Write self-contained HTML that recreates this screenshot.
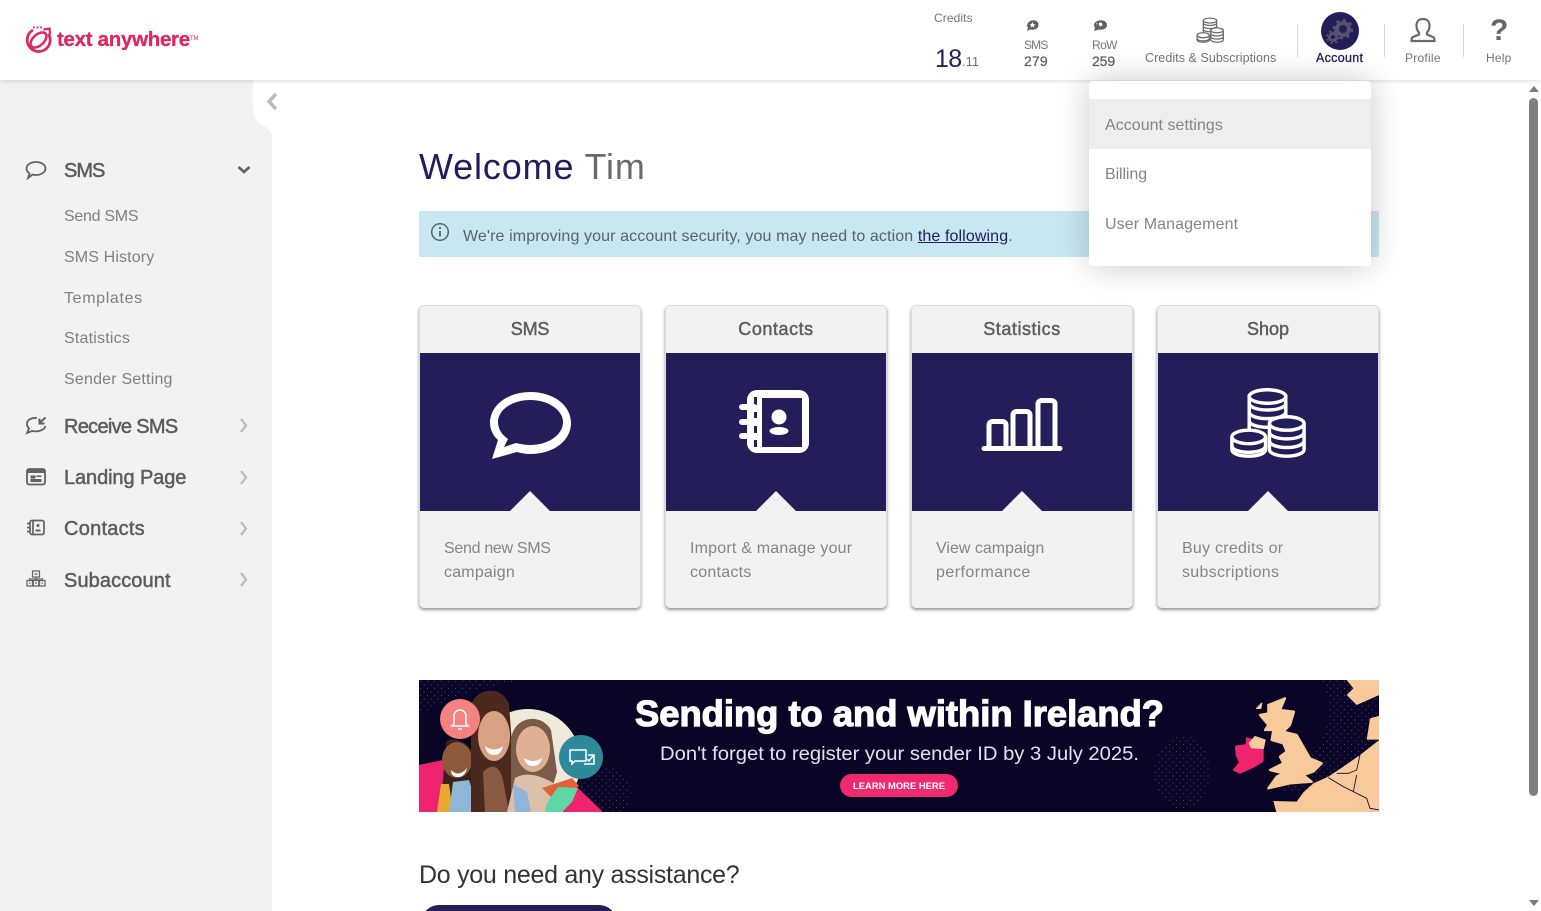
<!DOCTYPE html>
<html lang="en"><head><meta charset="utf-8"><title>Text Anywhere</title>
<style>
html,body{margin:0;padding:0;width:1541px;height:911px;overflow:hidden;background:#fff;font-family:"Liberation Sans",Arial,sans-serif;}
#p{position:relative;width:1541px;height:911px;overflow:hidden;background:#fff}
.a{position:absolute}
.t{position:absolute;white-space:nowrap;line-height:20px;height:20px}
.side{position:absolute;left:0;top:80px;width:272px;height:831px;background:#f2f2f2}
.top{position:absolute;left:0;top:0;width:1541px;height:80px;background:#fff;box-shadow:0 1px 5px rgba(0,0,0,.14)}
.sub{font-size:16px;color:#808080}
.nav{font-size:20px;color:#5d5d5d;-webkit-text-stroke:.5px #5d5d5d}
.lab{font-size:12px;color:#757575}
.card{position:absolute;top:305px;width:220px;height:302px;background:#f2f2f2;border:1px solid #dcdcdc;border-bottom:none;border-radius:5px;box-shadow:0 2px 3px rgba(0,0,0,.42)}
.card h3{position:absolute;left:0;top:12px;width:220px;margin:0;text-align:center;font-size:18px;line-height:22px;color:#5f5f5f;font-weight:normal;-webkit-text-stroke:.5px #5f5f5f}
.card .n{position:absolute;left:0;top:47px;width:220px;height:158px;background:#231d5a}
.card .n svg{position:absolute;left:0;top:0}
.card p{position:absolute;left:24px;top:231px;margin:0;font-size:16px;line-height:24px;color:#858585;white-space:nowrap}
</style></head><body><div id="p">

<svg width="0" height="0" style="position:absolute"><defs>
<symbol id="coins" viewBox="0 0 80 72">
<g fill="none" stroke="currentColor" stroke-width="3.6">
<path d="M21 7v40M59 7v32"/><path d="M21 16c0 4 8 7 19 7s19-3 19-7M21 25c0 4 8 7 19 7s19-3 19-7M21 34c0 4 8 7 19 7s19-3 19-7"/>
<ellipse cx="40" cy="9" rx="19" ry="7"/>
</g>
<g fill="#fff0" stroke="currentColor" stroke-width="3.6">
<path class="bg" d="M42 37v27c0 4 8 7 18 7s18-3 18-7V37z" fill="var(--bg)" stroke="none"/>
<path d="M42 37v27c0 4 8 7 18 7s18-3 18-7V37"/><path d="M42 46c0 4 8 7 18 7s18-3 18-7M42 55c0 4 8 7 18 7s18-3 18-7"/>
<ellipse cx="60" cy="37" rx="18" ry="7" fill="var(--bg)"/>
<path d="M3 51v13c0 4 7 7 17.500 7s17.500-3 17.500-7V51z" fill="var(--bg)" stroke="none"/>
<path d="M3 51v13c0 4 7 7 17.500 7s17.500-3 17.500-7V51"/><path d="M3 60c0 4 7 7 17.500 7s17.500-3 17.500-7"/>
<ellipse cx="20.500" cy="51" rx="17.500" ry="7" fill="var(--bg)"/>
</g></symbol>
</defs></svg>

<!-- sidebar -->
<div class="side"></div>
<svg class="a" style="left:250px;top:78px" width="30" height="60"><path d="M3 2H22V57C18 48 12 47 8 44 4 40 3 34 3 27Z" fill="#fff"/><path d="M26 16l-7 7.500 7 7.500" fill="none" stroke="#bdbdbd" stroke-width="3.600"/></svg>

<svg class="a" style="left:24px;top:160px" width="24" height="20" fill="none" stroke="#626262" stroke-width="1.800"><path d="M4 18l1.500-4.500C3.500 12 2.500 10 2.500 8.500 2.500 5 6.500 2 12 2s9.500 3 9.500 6.500S17.500 15 12 15c-1.500 0-2.500-.2-3.500-.4z"/></svg>
<div class="t nav" style="left:64px;top:161px;letter-spacing:-1px">SMS</div>
<svg class="a" style="left:236px;top:165px" width="16" height="10" fill="none" stroke="#626262" stroke-width="2.600"><path d="M2.500 2l5.500 5 5.500-5"/></svg>
<div class="t sub" style="left:64px;top:207px;letter-spacing:-.28px">Send SMS</div>
<div class="t sub" style="left:64px;top:248px;letter-spacing:.13px">SMS History</div>
<div class="t sub" style="left:64px;top:289px;letter-spacing:.65px">Templates</div>
<div class="t sub" style="left:64px;top:329px;letter-spacing:.2px">Statistics</div>
<div class="t sub" style="left:64px;top:370px;letter-spacing:.2px">Sender Setting</div>

<svg class="a" style="left:24px;top:415px" width="24" height="20" fill="none" stroke="#626262" stroke-width="1.800"><path d="M13 3C7 2.500 3 5 3 9c0 2 1 3.500 2 4.500L3 18l5-2c5 1 12 0 13.500-5"/><path d="M21.500 2.500L15.500 8M15.500 3.500V8.500H20.500" stroke-width="2"/></svg>
<div class="t nav" style="left:64px;top:417px;letter-spacing:-.7px">Receive SMS</div>
<svg class="a" style="left:26px;top:468px" width="20" height="18"><rect x="1" y="1" width="18" height="15.500" rx="2" fill="none" stroke="#626262" stroke-width="1.800"/><rect x="1" y="1" width="18" height="4" fill="#626262"/><rect x="4.500" y="7.500" width="5" height="3" fill="#626262"/><rect x="4.500" y="11" width="11" height="3" fill="#626262"/><rect x="10.500" y="7.500" width="5" height="1.500" fill="#626262"/></svg>
<div class="t nav" style="left:64px;top:468px;letter-spacing:-.1px">Landing Page</div>
<svg class="a" style="left:26px;top:519px" width="20" height="18" fill="none" stroke="#626262" stroke-width="1.700"><rect x="4" y="1.500" width="14" height="14" rx="2"/><path d="M1 4.500h3M1 8.500h3M1 12.500h3M7 2v13"/><circle cx="12" cy="6.500" r="1.500" fill="#626262" stroke="none"/><path d="M9.500 11.500h5" stroke-width="2"/></svg>
<div class="t nav" style="left:64px;top:519px;letter-spacing:.25px">Contacts</div>
<svg class="a" style="left:26px;top:570px" width="20" height="18" fill="none" stroke="#626262" stroke-width="1.200"><rect x="6.500" y="1" width="7" height="6"/><rect x="1" y="10.500" width="5.500" height="5.500"/><rect x="7.300" y="10.500" width="5.500" height="5.500"/><rect x="13.500" y="10.500" width="5.500" height="5.500"/><path d="M10 7v3.500M3.500 10.500V9h13v1.500M3 13h1.500M9 13h2M15.500 13h1.500M8.500 4h3"/></svg>
<div class="t nav" style="left:64px;top:571px;letter-spacing:.1px">Subaccount</div>
<svg class="a" style="left:238px;top:417px" width="12" height="175" fill="none" stroke="#bdbdbd" stroke-width="2.400"><path d="M3 2l5 6.500-5 6.500M3 54l5 6.500-5 6.500M3 105l5 6.500-5 6.500M3 156l5 6.500-5 6.500"/></svg>

<!-- top bar -->
<div class="top"></div>
<svg class="a" style="left:24px;top:24px" width="29" height="30" fill="none" stroke="#e0265f"><path d="M9 6A11.500 11.500 0 1 0 24.500 10" stroke-width="2.700"/><ellipse cx="14.500" cy="16" rx="9.500" ry="5.500" transform="rotate(-42 14.500 16)" stroke-width="2.500"/><path d="M19.500 5.500l6-1 .5 6" stroke-width="2.200"/><path d="M9 3.500h9" stroke-width="1.800" stroke-dasharray="1.800 1.800"/></svg>
<div class="t" style="left:57px;top:30px;font-size:20.500px;font-weight:bold;color:#e0265f;letter-spacing:-.3px;-webkit-text-stroke:.3px #e0265f">text anywhere</div>
<div class="t" style="left:190px;top:31px;font-size:6px;color:#e0265f;height:16px;line-height:16px;letter-spacing:-.2px">TM</div>

<div class="t lab" style="left:934px;top:8px;letter-spacing:.1px">Credits</div>
<div class="t" style="left:935px;top:49px;font-size:25px;color:#231d5a;letter-spacing:-.7px">18</div>
<div class="t" style="left:962px;top:52px;font-size:13px;color:#6f6f6f">.11</div>

<svg class="a" style="left:1025px;top:19px" width="15" height="13"><path d="M2 12l1-3C1.500 7.500 1.500 3 6.500 1.500c4-1 7 1 7 4.500 0 3.500-4 5.500-8 4.500z" fill="#626262"/><path d="M7.500 3l.9 2 2 .2-1.500 1.300.5 2-1.900-1-1.900 1 .5-2-1.500-1.300 2-.2z" fill="#fff"/></svg>
<div class="t lab" style="left:1024px;top:35px;letter-spacing:-.9px">SMS</div>
<div class="t" style="left:1024px;top:51px;font-size:14px;color:#5f5f5f;letter-spacing:.15px;-webkit-text-stroke:.25px #5f5f5f">279</div>
<svg class="a" style="left:1093px;top:19px" width="15" height="13"><path d="M1 12l1-3C0 6 1 2.500 6 1.500c4-1 8 1 8 4.500 0 3.500-4.500 5.500-8 4.500z" fill="#626262"/><path d="M6 3.500l3 .5 .5 2.500-2.500 1-1-1.500zM3 4l1.500.5-.5 1.500z" fill="#fff"/></svg>
<div class="t lab" style="left:1092px;top:35px;letter-spacing:-.6px">RoW</div>
<div class="t" style="left:1092px;top:51px;font-size:14px;color:#5f5f5f;letter-spacing:-.1px;-webkit-text-stroke:.25px #5f5f5f">259</div>

<svg class="a" style="left:1196px;top:17px;color:#6a6a6a;--bg:#fff" width="28" height="26"><use href="#coins" width="28" height="26"/></svg>
<div class="t" style="left:1145px;top:48px;font-size:12.500px;color:#757575;letter-spacing:.06px">Credits &amp; Subscriptions</div>

<div class="a" style="left:1297px;top:24px;width:1px;height:33px;background:#d6d6d6"></div>
<div class="a" style="left:1384px;top:24px;width:1px;height:33px;background:#d6d6d6"></div>
<div class="a" style="left:1463px;top:24px;width:1px;height:33px;background:#d6d6d6"></div>

<svg class="a" style="left:1321px;top:12px" width="38" height="38"><circle cx="19" cy="19" r="19" fill="#231d5a"/><circle cx="22" cy="17" r="6" fill="none" stroke="#57526f" stroke-width="4"/><circle cx="22" cy="17" r="9" fill="none" stroke="#57526f" stroke-width="2.500" stroke-dasharray="3 4"/><circle cx="12" cy="25" r="3.500" fill="none" stroke="#57526f" stroke-width="3"/><circle cx="12" cy="25" r="6" fill="none" stroke="#57526f" stroke-width="1.800" stroke-dasharray="2.400 2.400"/></svg>
<div class="t" style="left:1316px;top:48px;font-size:12.500px;color:#231d5a;-webkit-text-stroke:.3px #231d5a;letter-spacing:.3px">Account</div>

<svg class="a" style="left:1410px;top:17px" width="26" height="26" fill="none" stroke="#6a6a6a" stroke-width="2.200"><path d="M9 15.500c-1.500-1.500-2.500-4-2.500-7C6.500 4.500 9 2 13 2s6.500 2.500 6.500 6.500c0 3-1 5.500-2.500 7v2l6 2.500c1.300.7 1.500 1.500 1.500 4H1.500c0-2.500.2-3.300 1.500-4l6-2.500z"/></svg>
<div class="t lab" style="left:1405px;top:48px;letter-spacing:.25px">Profile</div>
<div class="t" style="left:1490px;top:16px;height:30px;line-height:30px;font-size:30px;font-weight:bold;color:#666">?</div>
<div class="t lab" style="left:1486px;top:48px;letter-spacing:.2px">Help</div>

<!-- main -->
<div class="t" style="left:419px;top:145px;height:44px;line-height:44px;font-size:36px;color:#231d5a;letter-spacing:.85px">Welcome <span style="color:#6a6a6a">Tim</span></div>

<div class="a" style="left:419px;top:211px;width:960px;height:46px;background:#c8e7f1;border-radius:2px"></div>
<svg class="a" style="left:430px;top:222px" width="20" height="20" fill="none" stroke="#5a6468" stroke-width="1.500"><circle cx="10" cy="10" r="8.300"/><path d="M10 9v5.500" stroke-width="1.800"/><circle cx="10" cy="6" r="1.100" fill="#5a6468" stroke="none"/></svg>
<div class="t" style="left:463px;top:227px;font-size:16px;color:#5b6367;letter-spacing:.11px">We're improving your account security, you may need to action <span style="color:#231d5a;text-decoration:underline">the following</span>.</div>

<!-- cards -->
<div class="card" style="left:419px"><h3 style="letter-spacing:-.2px">SMS</h3><div class="n">
<svg width="220" height="158"><path fill="#fff" fill-rule="evenodd" d="M72 106L78 87C73 83 70 76 70 70 70 52 88 39 110.500 39 133 39 151 52 151 70 151 88 133 101 110.500 101 105 101 101 100 97 99ZM88 86C82 82 78 76 78 69 78 57 92 47 110.500 47 128 47 143 57 143 69 143 82 128 92 110.500 92 105 92 100 91 96 90L84 94Z"/><path fill="#f2f2f2" d="M90 158l20-20 20 20z"/></svg></div>
<p><span style="letter-spacing:-.3px">Send new SMS</span><br><span style="letter-spacing:.2px">campaign</span></p></div>

<div class="card" style="left:665px"><h3 style="letter-spacing:.55px">Contacts</h3><div class="n">
<svg width="220" height="158"><rect x="81" y="37" width="62" height="63" rx="10" fill="#fff"/><rect x="96" y="45" width="40" height="49" fill="#231d5a"/><path d="M89.500 44v8M89.500 59v6M89.500 73v7M89.500 87v7" stroke="#231d5a" stroke-width="3"/><path d="M76 54h12M76 69h12M76 83h12" stroke="#fff" stroke-width="6" stroke-linecap="round"/><circle cx="113" cy="64" r="7.500" fill="#fff"/><ellipse cx="113" cy="78" rx="9.500" ry="4" fill="#fff"/><path fill="#f2f2f2" d="M90 158l20-20 20 20z"/></svg></div>
<p><span style="letter-spacing:.2px">Import &amp; manage your</span><br><span style="letter-spacing:.25px">contacts</span></p></div>

<div class="card" style="left:911px"><h3 style="letter-spacing:.55px">Statistics</h3><div class="n">
<svg width="220" height="158"><g fill="none" stroke="#fff" stroke-width="5"><path d="M77 95V72a3.500 3.500 0 0 1 3.500-3.500h10a3.500 3.500 0 0 1 3.500 3.500v23M101 95V62a3.500 3.500 0 0 1 3.500-3.500h10a3.500 3.500 0 0 1 3.500 3.500v33M126 95V51a3.500 3.500 0 0 1 3.500-3.500h10a3.500 3.500 0 0 1 3.500 3.500v44"/><path d="M72 95.500h76" stroke-linecap="round"/></g><path fill="#f2f2f2" d="M90 158l20-20 20 20z"/></svg></div>
<p><span>View campaign</span><br><span style="letter-spacing:.45px">performance</span></p></div>

<div class="card" style="left:1157px"><h3>Shop</h3><div class="n" style="color:#fff;--bg:#231d5a">
<svg width="220" height="158"><use href="#coins" x="71" y="34" width="77" height="71"/><path fill="#f2f2f2" d="M90 158l20-20 20 20z"/></svg></div>
<p><span style="letter-spacing:.25px">Buy credits or</span><br><span style="letter-spacing:.3px">subscriptions</span></p></div>

<!-- banner -->
<svg class="a" style="left:419px;top:680px" width="960" height="132" viewBox="0 0 960 132">
<defs>
<pattern id="dots" width="7" height="7" patternUnits="userSpaceOnUse"><circle cx="1.500" cy="1.500" r=".6" fill="#45427a"/><circle cx="5" cy="5" r=".6" fill="#45427a"/></pattern>
<clipPath id="bc"><rect width="960" height="132"/></clipPath>
</defs>
<g clip-path="url(#bc)">
<rect width="960" height="132" fill="#0a0527"/>
<path d="M0 0H100C70 8 30 14 0 36Z" fill="url(#dots)"/>
<ellipse cx="186" cy="112" rx="26" ry="26" fill="url(#dots)"/>
<ellipse cx="763" cy="92" rx="28" ry="37" fill="url(#dots)"/>
<path d="M900 0L960 0V70L890 110 860 112C890 80 930 40 900 0Z" fill="url(#dots)"/>
<circle cx="109" cy="82" r="53" fill="#efe9dc"/>
<path d="M0 85L24 80 50 132H0Z" fill="#f0246e"/>
<path d="M140 120L159 108 184 132H130Z" fill="#f0246e"/>
<path d="M20 132L24 100 27 62C32 56 50 60 56 78L62 132Z" fill="#3b2118"/>
<ellipse cx="38" cy="80" rx="15" ry="18" fill="#8d5a3c"/>
<path d="M32 90q8 8 16-2q-2 9-9 9t-7-7z" fill="#fff"/>
<path d="M18 132L22 104 30 104 34 132Z" fill="#e9a92c"/>
<path d="M30 132L34 102 50 100 60 132Z" fill="#8fb6d8"/>
<path d="M52 132V26C56 8 82 4 90 24L98 132Z" fill="#4a2a1e"/>
<ellipse cx="75" cy="56" rx="16" ry="25" fill="#d9a184"/>
<path d="M66 66q9 7 18 0q-2 9-9 9t-9-9z" fill="#fff"/>
<path d="M66 132L64 92C72 84 80 84 84 100L90 132Z" fill="#8a5a40"/>
<path d="M92 132V60C94 36 122 32 132 50L138 92 132 112 100 132Z" fill="#7a5c48"/>
<ellipse cx="114" cy="69" rx="17" ry="23" fill="#e0b095"/>
<path d="M105 78q9 6 18 0q-2 8-9 8t-9-8z" fill="#fff"/>
<path d="M88 132L96 98C110 90 126 98 136 104L144 132Z" fill="#dbc0ac"/>
<path d="M96 132L94 104 108 112 112 132Z" fill="#8fb6d8"/>
<path d="M123 108L153 98 160 106 140 125Z" fill="#e2603a"/>
<path d="M128 123L139 107 159 108 153 122 143 132H126Z" fill="#5fd6a6"/>
<circle cx="41" cy="39" r="20" fill="#f4827f"/>
<path d="M35 44V36a6 6 0 0 1 12 0v8l2 2H33zM39 49h4" fill="none" stroke="#fff" stroke-width="1.500"/>
<circle cx="162" cy="77" r="22" fill="#2e8a9a"/>
<path d="M151 70h16v11h-11l-3 3v-3h-2zM165 84h10v-9h-6M168 79l2 2 4-5" fill="none" stroke="#fff" stroke-width="1.500"/>
<text x="216" y="46" font-family="Liberation Sans" font-size="36" font-weight="bold" fill="#fff" stroke="#fff" stroke-width="1.200" textLength="529" lengthAdjust="spacingAndGlyphs">Sending to and within Ireland?</text>
<text x="241" y="80" font-family="Liberation Sans" font-size="19" fill="#e3e1f0" textLength="479" lengthAdjust="spacingAndGlyphs">Don't forget to register your sender ID by 3 July 2025.</text>
<rect x="421" y="94" width="118" height="23" rx="11.500" fill="#f02a6e"/>
<text x="434" y="109" font-family="Liberation Sans" font-size="9" font-weight="bold" fill="#fff" textLength="92" lengthAdjust="spacingAndGlyphs">LEARN MORE HERE</text>
<g transform="translate(721,-5) scale(.33333)">
<path fill="#f8c99a" stroke="#f8c99a" stroke-width="7" stroke-linejoin="round" d="M435 70L420 105 462 110 450 150 430 170 470 180 490 215 510 250 545 265 520 290 490 300 515 320 450 325 385 340 410 305 430 295 390 285 430 265 420 245 440 230 430 205 395 195 400 165 375 165 385 150 360 120 385 115 385 90 410 80Z"/>
<path fill="#f8c99a" stroke="#f8c99a" stroke-width="4" stroke-linejoin="round" d="M350 100L365 85 362 100Z"/>
<path fill="#f0246e" stroke="#f0246e" stroke-width="6" stroke-linejoin="round" d="M320 190L340 195 330 215 368 222 368 258 340 275 300 293 282 285 300 262 290 240 288 215 320 210Z"/>
<path fill="#f8c99a" stroke="#f8c99a" stroke-width="4" stroke-linejoin="round" d="M345 185L375 195 370 220 335 218 328 205Z"/>
<path fill="#f8c99a" d="M718 195L680 195 690 130 718 122ZM718 195V415H410L400 378 470 380 490 352 520 325 565 305 610 275 660 240ZM620 15L640 40 620 60 650 90 718 60V15Z"/>
<path fill="none" stroke="#0a0527" stroke-width="2.500" d="M565 308L610 335 640 350 680 370 690 400 718 405M660 240L650 285 625 295 590 295M640 350L650 300M680 195H718"/>
</g>
</g></svg>

<div class="t" style="left:419px;top:860px;height:30px;line-height:30px;font-size:25px;color:#333;letter-spacing:-.28px">Do you need any assistance?</div>
<div class="a" style="left:421px;top:905px;width:196px;height:20px;background:#231d5a;border-radius:18px 18px 0 0"></div>

<!-- scrollbar -->
<svg class="a" style="left:1527px;top:83px" width="14" height="828"><path d="M2 9L7 3l5 6z" fill="#7a7a7a"/><rect x="2" y="15" width="9" height="698" rx="4.500" fill="#808080"/><path d="M2 817l5 6 5-6z" fill="#7a7a7a"/></svg>

<!-- dropdown -->
<div class="a" style="left:1089px;top:81px;width:282px;height:185px;background:#fff;border-radius:4px;box-shadow:0 0 32px rgba(0,0,0,.22)">
<div class="a" style="left:0;top:18px;width:282px;height:50px;background:#eee"></div>
<div class="t" style="left:16px;top:33px;margin-top:2px;font-size:16px;color:#858585;letter-spacing:.03px">Account settings</div>
<div class="t" style="left:16px;top:84px;font-size:16px;color:#858585;letter-spacing:-.1px">Billing</div>
<div class="t" style="left:16px;top:134px;font-size:16px;color:#858585;letter-spacing:.1px">User Management</div>
</div>

</div></body></html>
